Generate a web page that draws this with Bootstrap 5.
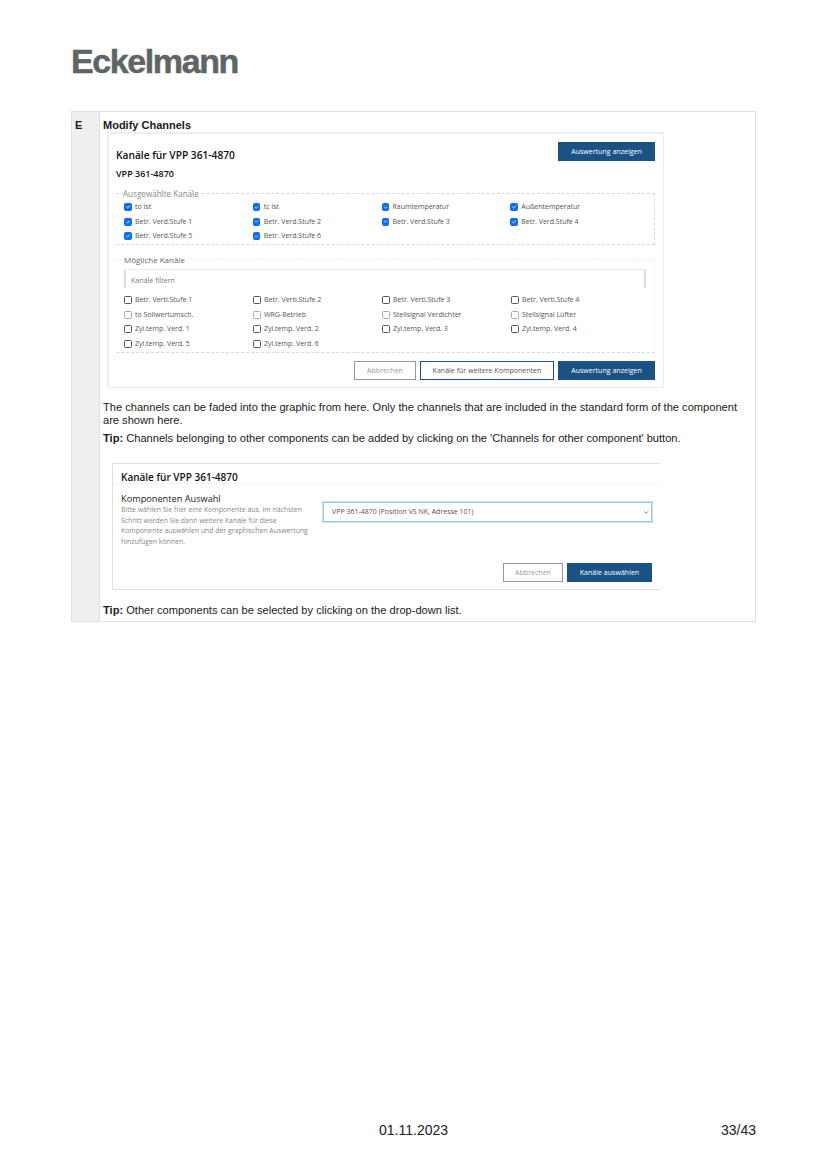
<!DOCTYPE html>
<html lang="de">
<head>
<meta charset="utf-8">
<title>Modify Channels</title>
<link href="https://cdn.jsdelivr.net/npm/bootstrap@5.3.0/dist/css/bootstrap.min.css" rel="stylesheet">
<style>
html,body{margin:0;background:#fff}
body{font-family:"Liberation Sans",Arial,sans-serif;font-size:11.1px;line-height:13px;color:#1a1a1a}
.sheet{height:1169px;padding:0 71px 31px;display:flex;flex-direction:column}
.brand{font-family:"Liberation Sans",Arial,sans-serif;font-weight:700;font-size:34px;line-height:40px;letter-spacing:-1.4px;color:#5f6466;margin-top:41px;height:70px;-webkit-text-stroke:.5px #5f6466}
.frame{border:1px solid #e0e0e0;display:flex;height:511px}
.tag{width:28px;flex:none;background:#efefef;border-right:1px solid #e0e0e0;font-weight:700;font-size:11px;padding:7px 0 0 3px}
.body-cell{flex:1;padding:7px 0 0 3px;min-width:0}
.heading{font-weight:700;font-size:11px;line-height:13px}
.shot{font-family:"Open Sans",sans-serif;color:#333}
.shot-a{width:557px;height:256px;margin-left:4px;border:solid #eee;border-width:2px 1px 1px 2px;padding:8px 8px 0 7px}
.shot-title{font-weight:600;font-size:10.2px;color:#111;line-height:14px;margin-top:6px}
.shot-sub{font-weight:600;font-size:9px;color:#111;line-height:12px;margin-top:7px}
.top-bar{height:19px}
.act{font-family:"Open Sans",sans-serif;font-size:7.05px;line-height:15px;height:19px;border-radius:0;padding:0;display:inline-flex;align-items:center;justify-content:center}
.act-main{width:97px;background:#1a5285;border:1px solid #1a5285;color:#fff}
.act-other{width:134px;background:#fff;border:1px solid #1a5285;color:#555}
.act-cancel{width:62px;background:#fff;border:1px solid #999;color:#999}
.act-wide{width:85px}
.act-narrow{width:60px}
.box-a{position:relative;margin-top:13px;height:52px;border:1px dashed #d9d9d9;border-width:1px 1px 1px 0;padding:6px 15px 0 8px}
.box-b{position:relative;margin-top:14px;height:94px;border:1px dashed #eee;border-width:1px 1px 1px 0;border-bottom-color:#d9d9d9;padding:9px 8px 0 8px}
.cap{position:absolute;top:-6px;left:7px;background:#fff;font-size:8.1px;line-height:11px;color:#888;padding:0}
.cap-dark{left:8px;color:#666;font-size:8px;padding-right:4px}
.chk-row{margin:0;--bs-gutter-x:0;height:14.5px}
.box-b .chk-row{width:516px}
.chk-row>div{display:flex;align-items:center;gap:3.5px;font-size:7px;line-height:14.5px;color:#555;white-space:nowrap}
.chk-row .form-check-input{width:7.5px;height:8px;margin:0;border-radius:1.5px;flex:none;border-color:#555}
.chk-row .form-check-input:checked{background-color:#0d6efd;border-color:#0d6efd}
.chk-row .pale{border-color:#aaa}
.filter{height:19px;border:solid #eee;border-width:1px 2px 0 2px;border-left-color:#ddd;border-right-color:#ddd;font-size:7.1px;color:#777;padding:3px 0 0 5px;line-height:15px;margin-bottom:5px}
.foot-a{margin-top:8px;gap:4px}
.para{margin:13px 0 0;width:650px}
.para+.para{margin-top:5px}
.shot-b{width:548px;height:127px;margin:18px 0 0 9px;border:solid #e0e0e0;border-width:1px 0 1px 1px;padding:7px 8px 0 8px;position:relative}
.shot-b-head{font-weight:600;font-size:10px;line-height:12px;color:#111;height:12px}
.shot-b-row{border-top:1px solid #f4f4f4;margin:0 -8px;padding:9px 8px 0;height:80px;gap:12px}
.pick-info{width:190px;flex:none}
.pick-title{font-size:9.2px;font-weight:500;color:#222;line-height:11px}
.pick-help{font-size:6.9px;line-height:10.5px;color:#888;margin-top:1px}
.pick-select{width:329px;flex:none;height:20px;border:1px solid #9ccbe6;box-shadow:0 0 0 1px #c7e1f0;border-radius:0;font-size:7px;color:#555;padding:0 4px 0 8px;margin-top:9px;background-size:6px 5px;background-position:right 2px center;line-height:18px}
.foot-b{margin-top:0;gap:4px;padding-right:0}
.tip{margin:14px 0 0}
.page-foot{margin-top:auto;position:relative;font-size:14px;line-height:15px;color:#222;display:flex;justify-content:flex-end}
.date{position:absolute;left:308px;top:0}
</style>
</head>
<body>
<div class="sheet">
  <div class="brand">Eckelmann</div>
  <div class="frame">
    <div class="tag">E</div>
    <div class="body-cell">
      <div class="heading">Modify Channels</div>
      <div class="shot shot-a">
        <div class="d-flex justify-content-between align-items-start top-bar">
          <div class="shot-title">Kanäle für VPP 361-4870</div>
          <button class="btn act act-main" type="button">Auswertung anzeigen</button>
        </div>
        <div class="shot-sub">VPP 361-4870</div>
        <div class="box-a">
          <span class="cap">Ausgewählte Kanäle</span>
          <div class="row chk-row">
            <div class="col-3"><input class="form-check-input" type="checkbox" checked>to ist</div>
            <div class="col-3"><input class="form-check-input" type="checkbox" checked>tc ist</div>
            <div class="col-3"><input class="form-check-input" type="checkbox" checked>Raumtemperatur</div>
            <div class="col-3"><input class="form-check-input" type="checkbox" checked>Außentemperatur</div>
          </div>
          <div class="row chk-row">
            <div class="col-3"><input class="form-check-input" type="checkbox" checked>Betr. Verd.Stufe 1</div>
            <div class="col-3"><input class="form-check-input" type="checkbox" checked>Betr. Verd.Stufe 2</div>
            <div class="col-3"><input class="form-check-input" type="checkbox" checked>Betr. Verd.Stufe 3</div>
            <div class="col-3"><input class="form-check-input" type="checkbox" checked>Betr. Verd.Stufe 4</div>
          </div>
          <div class="row chk-row">
            <div class="col-3"><input class="form-check-input" type="checkbox" checked>Betr. Verd.Stufe 5</div>
            <div class="col-3"><input class="form-check-input" type="checkbox" checked>Betr. Verd.Stufe 6</div>
          </div>
        </div>
        <div class="box-b">
          <span class="cap cap-dark">Mögliche Kanäle</span>
          <div class="filter">Kanäle filtern</div>
          <div class="row chk-row">
            <div class="col-3"><input class="form-check-input" type="checkbox">Betr. Verti.Stufe 1</div>
            <div class="col-3"><input class="form-check-input" type="checkbox">Betr. Verti.Stufe 2</div>
            <div class="col-3"><input class="form-check-input" type="checkbox">Betr. Verti.Stufe 3</div>
            <div class="col-3"><input class="form-check-input" type="checkbox">Betr. Verti.Stufe 4</div>
          </div>
          <div class="row chk-row">
            <div class="col-3"><input class="form-check-input pale" type="checkbox">to Sollwertumsch.</div>
            <div class="col-3"><input class="form-check-input pale" type="checkbox">WRG-Betrieb</div>
            <div class="col-3"><input class="form-check-input pale" type="checkbox">Stellsignal Verdichter</div>
            <div class="col-3"><input class="form-check-input pale" type="checkbox">Stellsignal Lüfter</div>
          </div>
          <div class="row chk-row">
            <div class="col-3"><input class="form-check-input" type="checkbox">Zyl.temp. Verd. 1</div>
            <div class="col-3"><input class="form-check-input" type="checkbox">Zyl.temp. Verd. 2</div>
            <div class="col-3"><input class="form-check-input" type="checkbox">Zyl.temp. Verd. 3</div>
            <div class="col-3"><input class="form-check-input" type="checkbox">Zyl.temp. Verd. 4</div>
          </div>
          <div class="row chk-row">
            <div class="col-3"><input class="form-check-input" type="checkbox">Zyl.temp. Verd. 5</div>
            <div class="col-3"><input class="form-check-input" type="checkbox">Zyl.temp. Verd. 6</div>
          </div>
        </div>
        <div class="d-flex justify-content-end foot-a">
          <button class="btn act act-cancel" type="button">Abbrechen</button>
          <button class="btn act act-other" type="button">Kanäle für weitere Komponenten</button>
          <button class="btn act act-main" type="button">Auswertung anzeigen</button>
        </div>
      </div>
      <p class="para">The channels can be faded into the graphic from here. Only the channels that are included in the standard form of the component are shown here.</p>
      <p class="para"><b>Tip:</b> Channels belonging to other components can be added by clicking on the 'Channels for other component' button.</p>
      <div class="shot shot-b">
        <div class="shot-b-head">Kanäle für VPP 361-4870</div>
        <div class="d-flex shot-b-row">
          <div class="pick-info">
            <div class="pick-title">Komponenten Auswahl</div>
            <div class="pick-help">Bitte wählen Sie hier eine Komponente aus. Im nächsten Schritt werden Sie dann weitere Kanäle für diese Komponente auswählen und der graphischen Auswertung hinzufügen können.</div>
          </div>
          <select class="form-select pick-select"><option>VPP 361-4870 (Position VS NK, Adresse 101)</option></select>
        </div>
        <div class="d-flex justify-content-end foot-b">
          <button class="btn act act-cancel act-narrow" type="button">Abbrechen</button>
          <button class="btn act act-main act-wide" type="button">Kanäle auswählen</button>
        </div>
      </div>
      <p class="tip"><b>Tip:</b> Other components can be selected by clicking on the drop-down list.</p>
    </div>
  </div>
  <div class="page-foot"><span class="date">01.11.2023</span><span>33/43</span></div>
</div>
</body>
</html>
